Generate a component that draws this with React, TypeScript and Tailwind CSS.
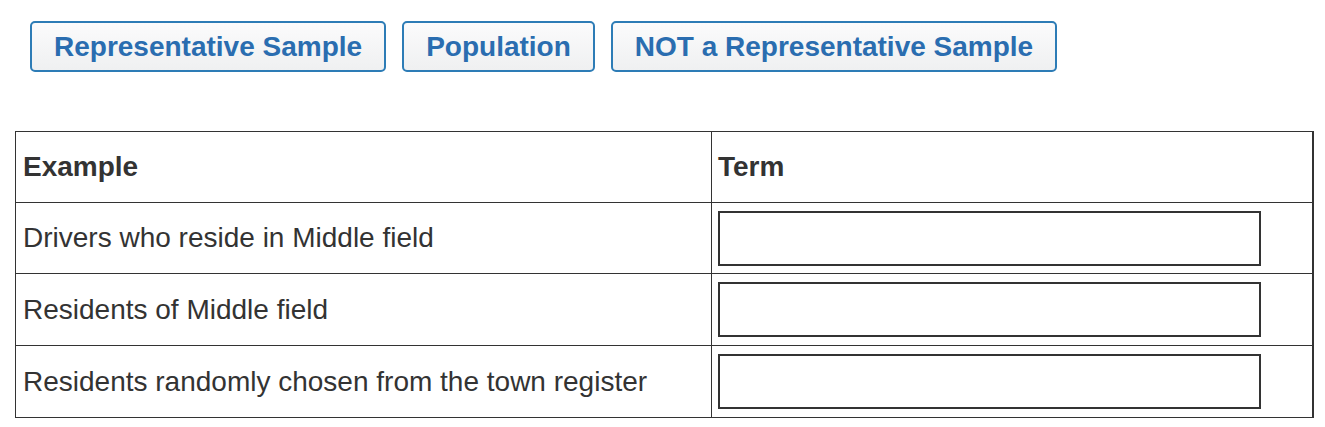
import React from "react";

const buttons = ["Representative Sample", "Population", "NOT a Representative Sample"];

const rows = [
  { text: "Drivers who reside in Middle field", h: "h-[71px]" },
  { text: "Residents of Middle field", h: "h-[72px]" },
  { text: "Residents randomly chosen from the town register", h: "h-[72px]" },
];

export default function App() {
  return (
    <div className="w-[1325px] h-[427px] overflow-hidden bg-white font-['Liberation_Sans',Arial,sans-serif]">
      <div className="flex gap-[16px] pl-[30px] pt-[21px]">
        {buttons.map((b) => (
          <button
            key={b}
            className="h-[51px] px-[22px] flex items-center border-2 border-[#2d7cb6] rounded-[5px] bg-gradient-to-b from-[#fbfbfc] to-[#eff0f1] text-[28px] leading-none font-bold text-[#2a6db0]"
          >
            {b}
          </button>
        ))}
      </div>
      <div className="ml-[15px] mt-[59px] w-[1299px] border-l border-t border-r-2 border-[#333] text-[#333] text-[28px] leading-none">
        <div className="flex h-[71px] border-b border-[#333]">
          <div className="w-[696px] border-r border-[#333] flex items-center px-[7px] font-bold">Example</div>
          <div className="flex-1 flex items-center px-[6px] font-bold">Term</div>
        </div>
        {rows.map((r) => (
          <div key={r.text} className={`flex ${r.h} border-b border-[#333]`}>
            <div className="w-[696px] border-r border-[#333] flex items-center px-[7px]">{r.text}</div>
            <div className="flex-1 pl-[6px] pt-[8px]">
              <div className="w-[543px] h-[55px] border-2 border-[#333] bg-white" />
            </div>
          </div>
        ))}
      </div>
    </div>
  );
}
